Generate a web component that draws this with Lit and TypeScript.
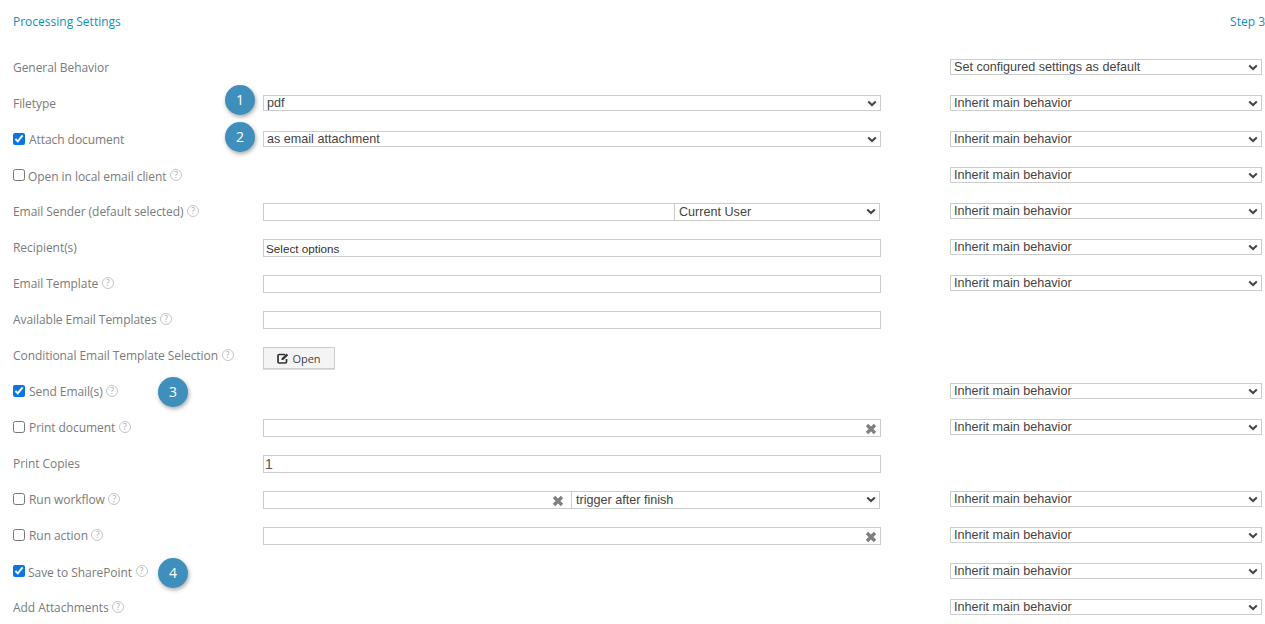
import { LitElement, css, html, nothing } from 'lit'
import { customElement } from 'lit/decorators.js'

interface Row {
  label: string
  check?: boolean
  tight?: boolean
  help?: boolean
  control?: 'select' | 'input' | 'number' | 'clear' | 'sender' | 'workflow' | 'button'
  value?: string
  side?: string
  badge?: 'one' | 'two' | 'three' | 'four'
}

const INHERIT = 'Inherit main behavior'

const BADGE_TEXT = { one: '1', two: '2', three: '3', four: '4' }

const ROWS: Row[] = [
  { label: 'General Behavior', side: 'Set configured settings as default' },
  { label: 'Filetype', control: 'select', value: 'pdf', side: INHERIT, badge: 'one' },
  { label: 'Attach document', check: true, control: 'select', value: 'as email attachment', side: INHERIT, badge: 'two' },
  { label: 'Open in local email client', check: false, tight: true, help: true, side: INHERIT },
  { label: 'Email Sender (default selected)', help: true, control: 'sender', side: INHERIT },
  { label: 'Recipient(s)', control: 'input', value: 'Select options', side: INHERIT },
  { label: 'Email Template', help: true, control: 'input', side: INHERIT },
  { label: 'Available Email Templates', help: true, control: 'input' },
  { label: 'Conditional Email Template Selection', help: true, control: 'button' },
  { label: 'Send Email(s)', check: true, help: true, side: INHERIT, badge: 'three' },
  { label: 'Print document', check: false, help: true, control: 'clear', side: INHERIT },
  { label: 'Print Copies', control: 'number', value: '1' },
  { label: 'Run workflow', check: false, help: true, control: 'workflow', side: INHERIT },
  { label: 'Run action', check: false, help: true, control: 'clear', side: INHERIT },
  { label: 'Save to SharePoint', check: true, tight: true, help: true, side: INHERIT, badge: 'four' },
  { label: 'Add Attachments', help: true, side: INHERIT },
]

const chevron = html`<svg class="chev" width="10" height="7" viewBox="0 0 10 7">
  <path d="M1.2 1.4 5 5 8.8 1.4" fill="none" stroke="#444" stroke-width="2" />
</svg>`

const cross = html`<svg class="cross" width="12" height="12" viewBox="0 0 12 12">
  <path d="M2 2 10 10M10 2 2 10" fill="none" stroke="#808080" stroke-width="3.4" />
</svg>`

const editIcon = html`<svg width="12" height="11" viewBox="0 0 12 11">
  <path d="M8 1.5H2.2A1.2 1.2 0 0 0 1 2.7v6.1A1.2 1.2 0 0 0 2.2 10h6.1a1.2 1.2 0 0 0 1.2-1.2V6" fill="none" stroke="#333" stroke-width="1.7" />
  <path d="M4.5 5.5 9.6.6l1.6 1.6-5 4.9H4.5z" fill="#333" />
</svg>`

@customElement('app-root')
export class AppRoot extends LitElement {
  static styles = css`
    :host {
      display: block;
      height: 624px;
      overflow: hidden;
      background: #fff;
      font-family: 'Open Sans', sans-serif;
      font-size: 12px;
      color: #7b7b7b;
    }

    .head {
      display: flex;
      justify-content: space-between;
      height: 49px;
      padding: 13px 0 0 13px;
      box-sizing: border-box;
      color: #0a93b9;
      line-height: 17px;
    }

    .row {
      display: grid;
      grid-template-columns: 250px 618px 69px 312px;
      align-items: center;
      height: 36px;
      padding-left: 13px;
    }

    .side {
      grid-column: 3 / 5;
      margin-left: 69px;
    }

    .label {
      position: relative;
      display: flex;
      align-items: center;
      letter-spacing: -0.06px;
      line-height: 17px;
    }

    input[type='checkbox'] {
      width: 12px;
      height: 12px;
      margin: 0 4px 0 0;
      accent-color: #0a75e6;
    }

    .tight input[type='checkbox'] {
      margin-right: 3px;
    }

    .tight .name {
      margin-top: 2px;
    }

    .help {
      display: inline-flex;
      align-items: center;
      justify-content: center;
      box-sizing: border-box;
      width: 12px;
      height: 12px;
      margin-left: 3.5px;
      border: 1px solid #c6c6c6;
      border-radius: 50%;
      color: #a6a6a6;
      font-size: 8.5px;
      line-height: 1;
    }

    .badge {
      position: absolute;
      width: 30px;
      height: 30px;
      border-radius: 50%;
      background: #3f8fbc;
      box-shadow: 1px 2px 4px rgba(0, 0, 0, 0.35);
      color: #fff;
      font-size: 14px;
      font-weight: 500;
      letter-spacing: 0;
      line-height: 30px;
      text-align: center;
    }

    .one {
      left: 212px;
      top: -10px;
    }

    .two {
      left: 212px;
      top: -9px;
    }

    .three {
      left: 145px;
      top: -6px;
    }

    .four {
      left: 145px;
      top: -4px;
    }

    .box {
      display: flex;
      align-items: center;
      box-sizing: border-box;
      height: 18px;
      margin-top: 1px;
      border: 1px solid #ccc;
      background: #fff;
      font-family: 'Liberation Sans', sans-serif;
      font-size: 11.7px;
      color: #333;
      overflow: hidden;
      white-space: nowrap;
    }

    .select {
      justify-content: space-between;
      height: 16px;
      margin-top: 0;
      padding: 0 3px 0 3px;
      font-size: 12.6px;
      color: #444;
    }

    .text {
      padding: 2px 0 0 2px;
    }

    .number {
      padding-left: 1px;
      font-size: 14px;
      color: #555;
    }

    .clear {
      justify-content: flex-end;
      padding-right: 3px;
    }

    .split {
      display: flex;
      margin: 1px 1px 0 0;
    }

    .split .box {
      margin-top: 0;
    }

    .split .select {
      flex: 1;
      height: 18px;
      margin-left: -1px;
      padding-left: 4px;
    }

    .sender {
      width: 412px;
      flex: none;
    }

    .run {
      width: 309px;
      flex: none;
      padding-right: 7px;
    }

    .open {
      display: inline-flex;
      align-items: center;
      justify-content: center;
      gap: 3px;
      box-sizing: border-box;
      width: 72px;
      height: 22px;
      margin-top: 6px;
      border: 1px solid #ccc;
      background: #f4f4f4;
      box-shadow: 0 1px 0 #ddd;
      color: #444;
      font-family: 'Open Sans', sans-serif;
      font-size: 11px;
      font-weight: 500;
    }

    .cross {
      margin-top: 2px;
    }
  `

  private renderControl(row: Row) {
    switch (row.control) {
      case 'select':
        return html`<div class="box select"><span>${row.value}</span>${chevron}</div>`
      case 'input':
        return html`<div class="box text">${row.value}</div>`
      case 'number':
        return html`<div class="box number">${row.value}</div>`
      case 'clear':
        return html`<div class="box clear">${cross}</div>`
      case 'sender':
        return html`<div class="split">
          <div class="box sender"></div>
          <div class="box select"><span>Current User</span>${chevron}</div>
        </div>`
      case 'workflow':
        return html`<div class="split">
          <div class="box clear run">${cross}</div>
          <div class="box select"><span>trigger after finish</span>${chevron}</div>
        </div>`
      case 'button':
        return html`<div><button class="open">${editIcon}Open</button></div>`
      default:
        return html`<div></div>`
    }
  }

  private renderRow(row: Row) {
    return html`<div class="row">
      <label class="label ${row.tight ? 'tight' : ''}">
        ${row.check === undefined ? nothing : html`<input type="checkbox" .checked=${row.check} />`}
        <span class="name">${row.label}</span>
        ${row.help ? html`<span class="help">?</span>` : nothing}
        ${row.badge ? html`<span class="badge ${row.badge}">${BADGE_TEXT[row.badge]}</span>` : nothing}
      </label>
      ${this.renderControl(row)}
      ${row.side
        ? html`<div class="box select side"><span>${row.side}</span>${chevron}</div>`
        : nothing}
    </div>`
  }

  render() {
    return html`
      <div class="head"><span>Processing Settings</span><span>Step 3</span></div>
      ${ROWS.map((row) => this.renderRow(row))}
    `
  }
}
